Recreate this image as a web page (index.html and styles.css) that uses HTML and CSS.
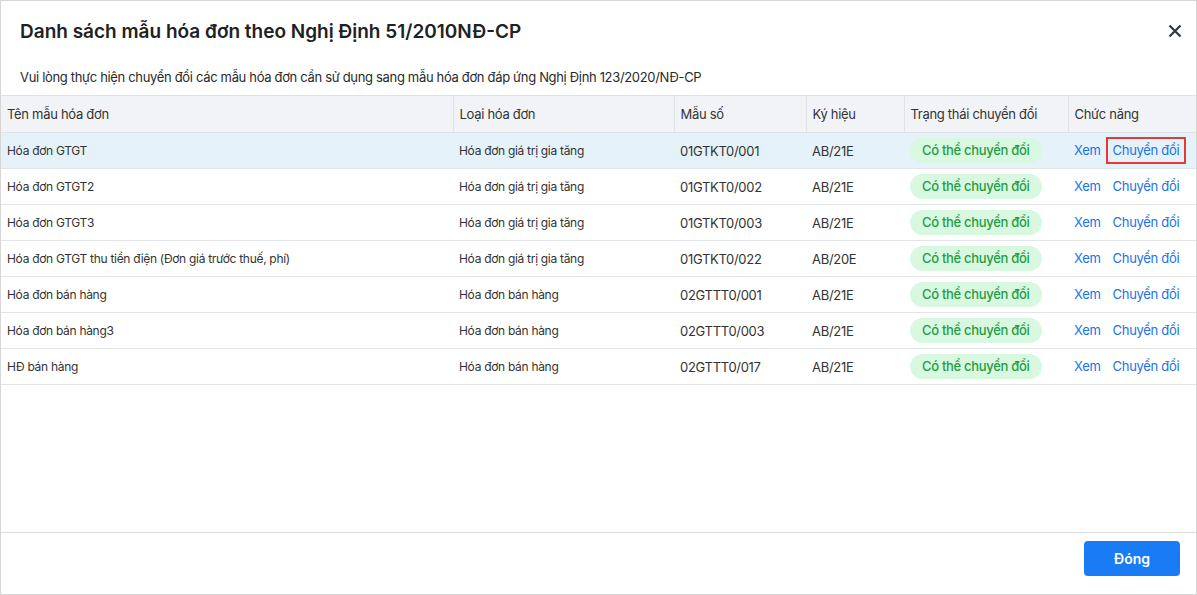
FILE: index.html
```html
<!DOCTYPE html>
<html lang="vi">
<head>
<meta charset="utf-8">
<title>Danh sách mẫu hóa đơn</title>
<link rel="stylesheet" href="styles.css">
</head>
<body>
<div class="dialog">
  <div class="dialog-head">
    <h1 class="title">Danh sách mẫu hóa đơn theo Nghị Định 51/2010NĐ-CP</h1>
    <button class="close" aria-label="Đóng">
      <svg width="14" height="14" viewBox="0 0 14 14"><path d="M1.5 1.5 L12.5 12.5 M12.5 1.5 L1.5 12.5" stroke="#2f3744" stroke-width="2.2" stroke-linecap="butt"/></svg>
    </button>
  </div>
  <p class="subtitle">Vui lòng thực hiện chuyển đổi các mẫu hóa đơn cần sử dụng sang mẫu hóa đơn đáp ứng Nghị Định 123/2020/NĐ-CP</p>
  <div class="table-wrap">
    <table class="grid">
      <colgroup>
        <col class="c1"><col class="c2"><col class="c3"><col class="c4"><col class="c5"><col class="c6">
      </colgroup>
      <thead>
        <tr>
          <th>Tên mẫu hóa đơn</th>
          <th>Loại hóa đơn</th>
          <th>Mẫu số</th>
          <th>Ký hiệu</th>
          <th>Trạng thái chuyển đổi</th>
          <th>Chức năng</th>
        </tr>
      </thead>
      <tbody>
        <tr class="selected">
          <td>Hóa đơn GTGT</td><td>Hóa đơn giá trị gia tăng</td><td class="num">01GTKT0/001</td><td class="num">AB/21E</td>
          <td><span class="badge">Có thể chuyển đổi</span></td>
          <td class="actions"><a class="link">Xem</a><a class="link hl">Chuyển đổi</a></td>
        </tr>
        <tr>
          <td>Hóa đơn GTGT2</td><td>Hóa đơn giá trị gia tăng</td><td class="num">01GTKT0/002</td><td class="num">AB/21E</td>
          <td><span class="badge">Có thể chuyển đổi</span></td>
          <td class="actions"><a class="link">Xem</a><a class="link">Chuyển đổi</a></td>
        </tr>
        <tr>
          <td>Hóa đơn GTGT3</td><td>Hóa đơn giá trị gia tăng</td><td class="num">01GTKT0/003</td><td class="num">AB/21E</td>
          <td><span class="badge">Có thể chuyển đổi</span></td>
          <td class="actions"><a class="link">Xem</a><a class="link">Chuyển đổi</a></td>
        </tr>
        <tr>
          <td>Hóa đơn GTGT thu tiền điện (Đơn giá trước thuế, phí)</td><td>Hóa đơn giá trị gia tăng</td><td class="num">01GTKT0/022</td><td class="num">AB/20E</td>
          <td><span class="badge">Có thể chuyển đổi</span></td>
          <td class="actions"><a class="link">Xem</a><a class="link">Chuyển đổi</a></td>
        </tr>
        <tr>
          <td>Hóa đơn bán hàng</td><td>Hóa đơn bán hàng</td><td class="num">02GTTT0/001</td><td class="num">AB/21E</td>
          <td><span class="badge">Có thể chuyển đổi</span></td>
          <td class="actions"><a class="link">Xem</a><a class="link">Chuyển đổi</a></td>
        </tr>
        <tr>
          <td>Hóa đơn bán hàng3</td><td>Hóa đơn bán hàng</td><td class="num">02GTTT0/003</td><td class="num">AB/21E</td>
          <td><span class="badge">Có thể chuyển đổi</span></td>
          <td class="actions"><a class="link">Xem</a><a class="link">Chuyển đổi</a></td>
        </tr>
        <tr>
          <td>HĐ bán hàng</td><td>Hóa đơn bán hàng</td><td class="num">02GTTT0/017</td><td class="num">AB/21E</td>
          <td><span class="badge">Có thể chuyển đổi</span></td>
          <td class="actions"><a class="link">Xem</a><a class="link">Chuyển đổi</a></td>
        </tr>
      </tbody>
    </table>
  </div>
  <div class="dialog-foot">
    <button class="btn-primary">Đóng</button>
  </div>
</div>
</body>
</html>
```

FILE: styles.css
```css
* { box-sizing: border-box; }
html, body { margin: 0; padding: 0; }
body {
  font-family: Inter, "Noto Sans", "Liberation Sans", sans-serif;
  color: #333;
  background: #fff;
}
.dialog {
  width: 1197px;
  height: 595px;
  border: 1px solid #d6d6d6;
  display: flex;
  flex-direction: column;
  background: #fff;
}
.dialog-head {
  display: flex;
  align-items: center;
  justify-content: space-between;
  padding: 18px 11px 0 19px;
  height: 44px;
}
.title {
  margin: 0;
  font-size: 19px;
  line-height: 26px;
  font-weight: 600;
  color: #212121;
  letter-spacing: 0;
}
.close {
  border: 0;
  background: none;
  padding: 0;
  width: 20px;
  height: 20px;
  display: flex;
  align-items: center;
  justify-content: center;
  margin-top: -3px;
}
.subtitle {
  margin: 0;
  padding: 23px 19px 0;
  height: 50px;
  font-size: 13px;
  line-height: 18px;
  color: #2a2a2a;
  letter-spacing: -0.33px;
}
.table-wrap {
  flex: 1;
}
.grid {
  width: 100%;
  border-collapse: collapse;
  table-layout: fixed;
}
.c1 { width: 452px; }
.c2 { width: 221px; }
.c3 { width: 132px; }
.c4 { width: 98px; }
.c5 { width: 164px; }
.c6 { width: auto; }
.grid th {
  background: #f2f3f7;
  border-top: 1px solid #dfe2e7;
  border-bottom: 1px solid #dfe2e7;
  border-left: 1px solid #dfe2e7;
  height: 37px;
  padding: 0 6px;
  text-align: left;
  font-weight: 400;
  font-size: 13px;
  color: #333;
  letter-spacing: -0.3px;
}
.grid th:first-child { border-left: 0; }
.grid td {
  height: 36px;
  padding: 0 6px;
  border-bottom: 1px solid #e2e4e8;
  font-size: 12px;
  color: #333;
  white-space: nowrap;
  letter-spacing: -0.3px;
}
.grid td.num { font-size: 13px; }
.grid tr.selected td { background: #e5f2fa; }
.badge {
  display: inline-block;
  height: 25px;
  line-height: 25px;
  padding: 0 12px;
  border-radius: 13px;
  background: #d8f9df;
  color: #1f9d46;
  font-size: 13px;
  font-weight: 500;
}
.grid td.actions { padding: 0; }
.link {
  display: inline-block;
  font-size: 13px;
  color: #1a73e8;
  padding: 3px 5px;
  border: 2px solid transparent;
  line-height: 17px;
  cursor: pointer;
}
.link:first-child { margin-left: -1px; }
.link + .link { margin-left: -2px; }
.link.hl { border-color: #e53935; }
.dialog-foot {
  border-top: 1px solid #dcdcdc;
  height: 62px;
  display: flex;
  justify-content: flex-end;
  padding: 8px 16px 0 0;
}
.btn-primary {
  width: 96px;
  height: 35px;
  border: 0;
  border-radius: 4px;
  background: #1a7cf5;
  color: #fff;
  font-family: inherit;
  font-size: 14px;
  font-weight: 600;
}
```
